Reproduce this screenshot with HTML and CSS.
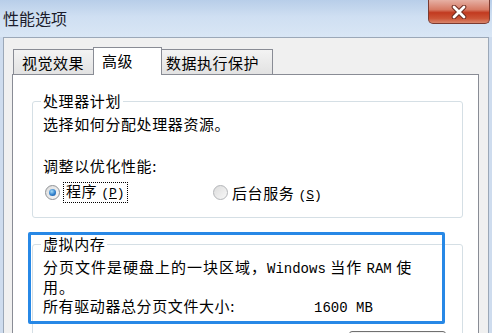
FILE: index.html
```html
<!DOCTYPE html>
<html lang="zh-CN">
<head>
<meta charset="utf-8">
<title>性能选项</title>
<link rel="stylesheet" href="styles.css">
</head>
<body>
<div class="window">
  <div class="titlebar">
    <span class="title">性能选项</span>
    <button class="close" aria-label="关闭">
      <svg width="18" height="14" viewBox="0 0 18 14">
        <path d="M4 2 L14 12 M14 2 L4 12" stroke="#6b2a1f" stroke-width="4.6" stroke-linecap="round" fill="none"/>
        <path d="M4 2 L14 12 M14 2 L4 12" stroke="#ffffff" stroke-width="2.8" stroke-linecap="round" fill="none"/>
      </svg>
    </button>
  </div>
  <div class="frame">
    <div class="client">
      <div class="tabs">
        <div class="tab tab-a">视觉效果</div>
        <div class="tab tab-b active">高级</div>
        <div class="tab tab-c">数据执行保护</div>
      </div>
      <div class="panel">
        <fieldset class="group group-cpu">
          <legend>处理器计划</legend>
          <p class="line l1">选择如何分配处理器资源。</p>
          <p class="line l2">调整以优化性能:</p>
          <div class="radios">
            <label class="radio-item first"><span class="radio checked"></span><span class="focus">程序 <span class="key">(<u>P</u>)</span></span></label>
            <label class="radio-item"><span class="radio"></span><span class="rtext">后台服务 <span class="key">(<u>S</u>)</span></span></label>
          </div>
        </fieldset>
        <div class="vm-wrap">
          <fieldset class="group group-vm">
            <legend>虚拟内存</legend>
            <p class="para">分页文件是硬盘上的一块区域，<span class="lat">Windows</span> 当作 <span class="lat">RAM</span> 使<br>用。</p>
            <div class="total"><span class="total-label">所有驱动器总分页文件大小:</span><span class="lat">1600 MB</span></div>
            <div class="btn-row"><button class="btn">更改(C)...</button></div>
          </fieldset>
          <div class="highlight"></div>
        </div>
      </div>
    </div>
  </div>
</div>
</body>
</html>
```
FILE: styles.css
```css
html, body {
  margin: 0;
  padding: 0;
}
body {
  width: 492px;
  height: 333px;
  overflow: hidden;
  font-family: "Noto Sans CJK SC", "Liberation Sans", sans-serif;
  font-size: 15px;
  color: #000;
}
.window {
  height: 333px;
  display: flex;
  flex-direction: column;
  background: #cedcee;
}
.titlebar {
  height: 37px;
  flex: none;
  display: flex;
  justify-content: space-between;
  align-items: flex-start;
  background: linear-gradient(#b8cee9, #cfdff2 45%, #d9e6f5);
}
.title {
  font-size: 16px;
  line-height: 20px;
  padding: 8px 0 0 3px;
  color: #1c1c2c;
}
.close {
  width: 62px;
  height: 24px;
  margin-right: 2px;
  padding: 0;
  border: 1px solid #7a3a30;
  border-top: none;
  border-radius: 0 0 5px 5px;
  background: linear-gradient(#e6b0a4, #d67a64 42%, #c23a20 55%, #cc5436 80%, #d9866c);
  display: flex;
  align-items: center;
  justify-content: center;
}
.frame {
  flex: 1;
  padding: 0 3px;
  display: flex;
  flex-direction: column;
}
.client {
  flex: 1;
  background: #f0f0f0;
  border: 1px solid #9ba8b8;
  border-bottom: none;
  display: flex;
  flex-direction: column;
}
.tabs {
  display: flex;
  align-items: flex-end;
  height: 28px;
  margin: 9px 0 -1px 9px;
}
.tab {
  box-sizing: border-box;
  height: 25px;
  margin-bottom: 1px;
  border: 1px solid #898c95;
  border-bottom: none;
  background: linear-gradient(#f3f3f3, #e2e2e2);
  display: flex;
  align-items: center;
  letter-spacing: 0.5px;
}
.tab-a { width: 80px; padding-left: 8px; border-right: none; }
.tab-b { width: 69px; padding-left: 8px; }
.tab-c { width: 111px; padding-left: 4px; border-left: none; }
.tab.active {
  height: 28px;
  margin-bottom: 0;
  background: #fff;
  position: relative;
  z-index: 1;
  padding-bottom: 3px;
}
.panel {
  flex: 1;
  margin-left: 8px;
  width: 467px;
  box-sizing: border-box;
  background: #fff;
  border: 1px solid #898c95;
  border-bottom: none;
}
.group {
  box-sizing: border-box;
  width: 431px;
  margin: 18px 0 0 19px;
  padding: 0 10px 15px 10px;
  border: 1px solid #d5dfe5;
  border-radius: 3px;
  min-width: 0;
}
.group legend {
  padding: 0 2px;
  margin-left: -2px;
  line-height: 16px;
  letter-spacing: 0.6px;
}
p { margin: 0; }
.line {
  line-height: 20px;
  letter-spacing: 0.6px;
}
.l1 { margin-top: 5px; }
.l2 { margin-top: 22px; }
.radios {
  display: flex;
  align-items: center;
  height: 20px;
  margin-top: 6px;
  letter-spacing: 0.6px;
}
.radio-item {
  display: flex;
  align-items: center;
  gap: 3px;
}
.radio-item.first {
  width: 170px;
}
.radio {
  box-sizing: border-box;
  width: 15px;
  height: 15px;
  margin-left: 2px;
  border-radius: 50%;
  border: 1px solid #8f9296;
  background: linear-gradient(135deg, #dcdcdc, #f8f8f8);
  display: flex;
  align-items: center;
  justify-content: center;
}
.radio-item + .radio-item .radio {
  margin-left: 0;
  border-color: #b3b5b8;
}
.radio.checked::after {
  content: "";
  width: 7px;
  height: 7px;
  border-radius: 50%;
  background: radial-gradient(circle at 40% 35%, #a6dcf8, #2f7fcc 55%, #1b4e8e);
}
.focus {
  border: 1px dotted #000;
  padding: 0 2px;
  line-height: 16px;
}
.rtext { padding-left: 1px; }
.key {
  font-family: "Liberation Mono", monospace;
  font-size: 13px;
  letter-spacing: 0;
}
.vm-wrap {
  position: relative;
  margin: 18px 0 0 19px;
  width: 431px;
}
.vm-wrap .group {
  margin: 0;
  padding-bottom: 20px;
}
.para {
  margin-top: 6px;
  line-height: 17px;
  letter-spacing: 1px;
}
.lat {
  font-family: "Liberation Mono", monospace;
  font-size: 14px;
  letter-spacing: 0;
}
.total {
  display: flex;
  align-items: baseline;
  margin-top: 1px;
  line-height: 20px;
  letter-spacing: 0.6px;
}
.total-label { width: 271px; flex: none; }
.btn-row {
  display: flex;
  justify-content: flex-end;
  margin-top: 13px;
}
.btn {
  width: 97px;
  height: 24px;
  margin-right: 6px;
  border: 1px solid #707070;
  border-radius: 3px;
  background: linear-gradient(#f2f2f2, #ebebeb 50%, #dddddd 51%, #cfcfcf);
  font: 15px "Noto Sans CJK SC", sans-serif;
  padding: 2px 0 0;
}
.highlight {
  position: absolute;
  left: -4px;
  top: -4px;
  width: 417px;
  height: 92px;
  box-sizing: border-box;
  border: 3px solid #2788e6;
  border-radius: 2px;
}
```
